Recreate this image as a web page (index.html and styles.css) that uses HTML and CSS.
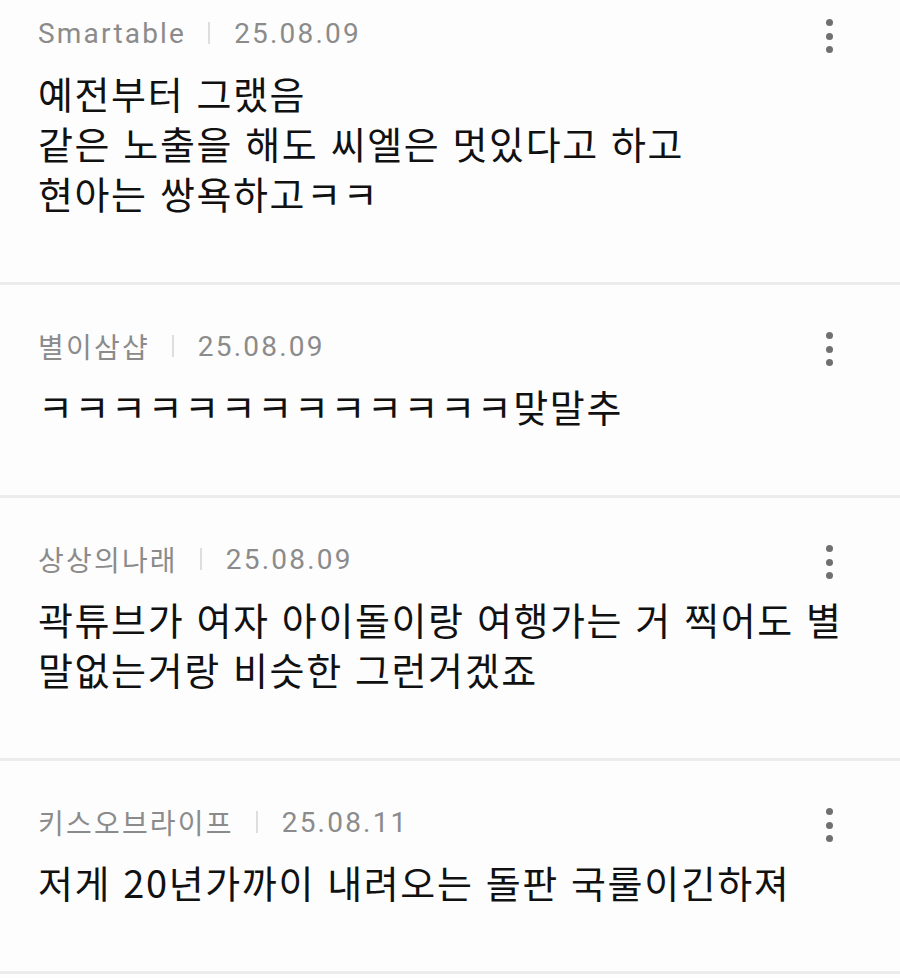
FILE: index.html
```html
<!DOCTYPE html>
<html lang="ko">
<head>
    <meta charset="UTF-8">
    <meta name="viewport" content="width=device-width, initial-scale=1.0">
    <title>댓글</title>
    <link rel="stylesheet" href="styles.css">
</head>
<body>
    <div class="comment-list">
        <!-- 댓글 1 -->
        <div class="comment">
            <div class="comment-head">
                <div class="meta">
                    <span class="nick">Smartable</span>
                    <span class="bar"></span>
                    <span class="date">25.08.09</span>
                </div>
                <div class="more"><i></i><i></i><i></i></div>
            </div>
            <p class="comment-text">예전부터 그랬음<br>같은 노출을 해도 씨엘은 멋있다고 하고<br>현아는 쌍욕하고ㅋㅋ</p>
        </div>

        <!-- 댓글 2 -->
        <div class="comment">
            <div class="comment-head">
                <div class="meta">
                    <span class="nick">별이삼샵</span>
                    <span class="bar"></span>
                    <span class="date">25.08.09</span>
                </div>
                <div class="more"><i></i><i></i><i></i></div>
            </div>
            <p class="comment-text">ㅋㅋㅋㅋㅋㅋㅋㅋㅋㅋㅋㅋㅋ맞말추</p>
        </div>

        <!-- 댓글 3 -->
        <div class="comment">
            <div class="comment-head">
                <div class="meta">
                    <span class="nick">상상의나래</span>
                    <span class="bar"></span>
                    <span class="date">25.08.09</span>
                </div>
                <div class="more"><i></i><i></i><i></i></div>
            </div>
            <p class="comment-text">곽튜브가 여자 아이돌이랑 여행가는 거 찍어도 별 말없는거랑 비슷한 그런거겠죠</p>
        </div>

        <!-- 댓글 4 -->
        <div class="comment">
            <div class="comment-head">
                <div class="meta">
                    <span class="nick">키스오브라이프</span>
                    <span class="bar"></span>
                    <span class="date">25.08.11</span>
                </div>
                <div class="more"><i></i><i></i><i></i></div>
            </div>
            <p class="comment-text">저게 20년가까이 내려오는 돌판 국룰이긴하져</p>
        </div>
    </div>
</body>
</html>
```

FILE: styles.css
```css
body {
    margin: 0;
    padding: 0;
    background-color: #fdfdfd;
    font-family: Roboto, "Noto Sans CJK KR", sans-serif;
    overflow: hidden;
}

.comment-list {
    margin-top: -28px;
}

.comment {
    padding: 41px 38px 64px 38px;
    border-bottom: 3px solid #ececec;
}

.comment-head {
    display: flex;
    justify-content: space-between;
    align-items: flex-start;
    height: 40px;
}

.meta {
    display: flex;
    align-items: center;
    height: 40px;
    font-size: 28px;
    color: #8b8b8b;
}

.nick,
.date {
    letter-spacing: 2.2px;
}

.bar {
    width: 2px;
    height: 22px;
    margin: 0 24px 0 22px;
    background-color: #dedede;
}

.more {
    display: flex;
    flex-direction: column;
    gap: 6.5px;
    margin-top: 6px;
    margin-right: 29px;
}

.more i {
    display: block;
    width: 7px;
    height: 7px;
    border-radius: 50%;
    background-color: #707070;
}

.comment-text {
    margin: 15px 0 0 0;
    font-family: "Noto Sans CJK KR", sans-serif;
    font-size: 38px;
    letter-spacing: 1.6px;
    line-height: 50px;
    color: #111111;
    word-break: keep-all;
}
```
